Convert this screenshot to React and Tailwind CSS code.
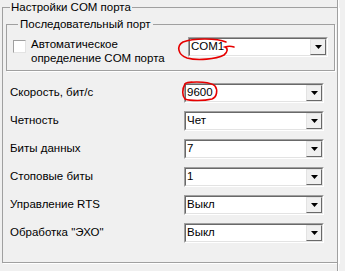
import React from 'react'

const Combo = ({ value }) => (
  <div className="w-[140px] h-[20px] flex items-stretch bg-white border-t border-l border-t-[#a0a0a0] border-l-[#a0a0a0] border-r border-b border-r-white border-b-white">
    <div className="flex-1 flex items-stretch border-t border-l border-t-[#696969] border-l-[#696969] border-r border-b border-r-[#e3e3e3] border-b-[#e3e3e3]">
      <div className="flex-1 pl-[1px] flex items-center leading-none">{value}</div>
      <div className="w-[16px] flex items-center justify-center bg-[#f0f0f0] border-t border-l border-t-[#e3e3e3] border-l-[#e3e3e3] border-r border-b border-r-[#696969] border-b-[#696969]">
        <svg width="7" height="4" viewBox="0 0 7 4">
          <path d="M0 0 H7 L3.5 4 Z" fill="#000" />
        </svg>
      </div>
    </div>
  </div>
)

const Row = ({ label, value }) => (
  <div className="flex items-center h-[20px]">
    <div className="w-[176px] pl-[2px]">{label}</div>
    <Combo value={value} />
  </div>
)

const App = () => {
  return (
    <div className="relative w-[345px] h-[271px] bg-[#f0f0f0] overflow-hidden text-black text-[11.5px] font-['Liberation_Sans',Arial,sans-serif]">
      <div className="flex h-full">
        <div className="pl-[2px] w-[337px]">
          <fieldset className="w-[331px] h-[263px] border border-[#a0a0a0] shadow-[1px_1px_0_#fff] px-[3px]">
            <legend className="ml-[4px] px-[1px] leading-[14px]">Настройки COM порта</legend>
            <fieldset className="mt-[3px] h-[54px] border border-[#a0a0a0] shadow-[1px_1px_0_#fff] px-[6px]">
              <legend className="ml-[5px] px-[2px] leading-[14px]">Последовательный порт</legend>
              <div className="flex items-start pt-[6px]">
                <div className="w-[13px] h-[13px] mt-[3px] bg-white border border-[#a0a0a0] border-r-[#e3e3e3] border-b-[#e3e3e3]" />
                <div className="w-[163px] pl-[5px] leading-[14px]">
                  Автоматическое<br />определение COM порта
                </div>
                <div className="-ml-[1px]">
                  <Combo value="COM1" />
                </div>
              </div>
            </fieldset>
            <div className="flex flex-col gap-[8px] mt-[12px] pl-[2px]">
              <Row label="Скорость, бит/с" value="9600" />
              <Row label="Четность" value="Чет" />
              <Row label="Биты данных" value="7" />
              <Row label="Стоповые биты" value="1" />
              <Row label="Управление RTS" value="Выкл" />
              <Row label={'Обработка "ЭХО"'} value="Выкл" />
            </div>
          </fieldset>
        </div>
        <div className="w-px h-full bg-[#a0a0a0]" />
        <div className="w-px h-full bg-white" />
      </div>
      <svg className="absolute inset-0 pointer-events-none" width="345" height="271" viewBox="0 0 345 271" fill="none">
        <path d="M226 42 C217 38, 193 38, 183 42 C176 46, 178 55, 187 58 C198 61, 216 59, 224 55 C228 52, 228 48, 225 47 C228 46, 231 46, 234 47" stroke="#e60000" strokeWidth="1.6" strokeLinecap="round" />
        <path d="M186 83 C196 81, 211 82, 215 86 C218 90, 217 97, 212 99 C204 101, 190 101, 185 99 C182 96, 182 89, 185 84 C186 83, 189 82, 192 82" stroke="#e60000" strokeWidth="1.6" strokeLinecap="round" />
      </svg>
    </div>
  )
}

export default App
